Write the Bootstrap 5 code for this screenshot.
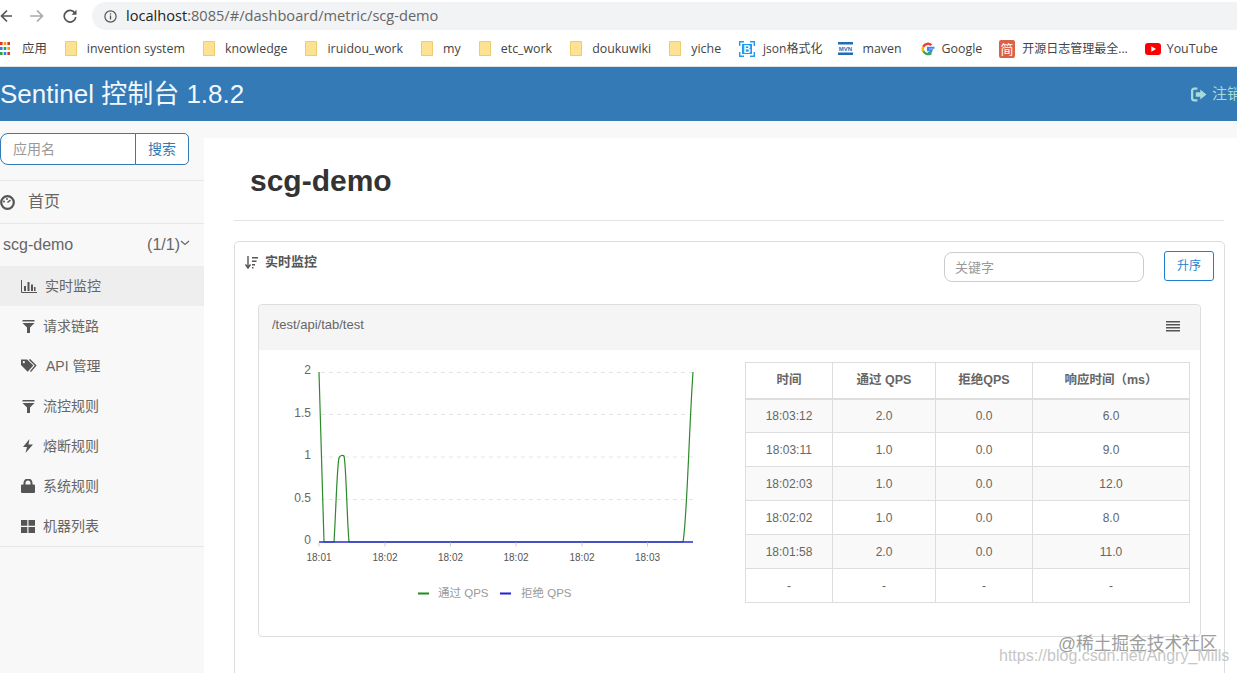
<!DOCTYPE html>
<html lang="zh">
<head>
<meta charset="utf-8">
<title>Sentinel 控制台</title>
<link href="https://cdn.jsdelivr.net/npm/bootstrap@5.3.0/dist/css/bootstrap.min.css" rel="stylesheet">
<style>
html,body{height:100%;overflow:hidden;background:#fff}
body{font-family:"Liberation Sans","Noto Sans CJK SC",sans-serif;font-size:14px;color:#333}
.shell{height:673px;overflow:hidden;position:relative}
.urlrow{height:30px;background:#fff;padding:2px 0 0 0;gap:0}
.backg{width:12px;margin-right:18px}
.fwdg{margin-right:19px}
.urlpill{flex:1;height:28px;background:#f1f3f4;border-radius:14px 0 0 14px;margin-left:15px;padding-left:12px;font-family:"Open Sans","Noto Sans CJK SC",sans-serif;font-size:14.6px;color:#666;gap:9px}
.urlpill b{font-weight:400;color:#222}
.bmrow{height:37px;background:#fff;padding-top:2px;font-family:"Open Sans","Noto Sans CJK SC",sans-serif;font-size:12.4px;color:#444;white-space:nowrap;border-bottom:1px solid #dfe3e8;overflow:hidden}
.bmitem{gap:10px;margin-right:18px;flex:none}
.bmfirst{margin-right:18px;gap:12px;flex:none}
.bmjson{gap:8px;margin-right:16px;flex:none}
.bmjson span{font-size:12px}
.bmmvn{gap:9px;margin-right:19px;flex:none}
.bmgoogle{gap:7px;margin-right:17px;flex:none}
.bmjian{gap:7px;margin-right:17px;flex:none}
.bmjian span{font-size:12px}
.bmyt{gap:6px;flex:none}
.topnav{height:54px;background:#337ab7;padding:0;overflow:hidden;flex-wrap:nowrap}
.brandtxt{font-size:26px;color:#f1f7fb;line-height:54px}
.logout{color:#a7dbd8;font-size:15px;gap:5px;margin-right:-5px;flex:none;white-space:nowrap}
.bodyrow{height:552px;background:#f8f8f8}
.sidecol{width:204px;flex:none;padding-top:12px;color:#666}
.searchgrp{width:189px;height:32px;margin-bottom:15px}
.searchgrp .form-control{font-size:14px;height:32px;border-color:#337ab7;padding:0 12px;border-radius:8px 0 0 8px;box-shadow:none}
.searchgrp .form-control::placeholder{color:#999}
.searchgrp .btn{font-size:14px;color:#337ab7;border-color:#337ab7;background:#fff;border-radius:0 5px 5px 0;padding:0 12px;height:32px}
.homeitem{height:44px;border-top:1px solid #e7e7e7;border-bottom:1px solid #e7e7e7;font-size:16px;gap:12px;padding-left:0;color:#666}
.appitem{height:42px;font-size:16px;color:#666;padding:0 14px 0 3px}
.sideitem{height:40px;font-size:14px;color:#666;padding-left:21px;gap:8px}
.sideitem.current{background:#eee}
.sideend{height:41px;border-bottom:1px solid #e7e7e7}
.iconf{margin-left:1px}
.iconb{margin:0 2px}
.maincol{flex:1;background:#fff;margin-top:17px;padding:0 13px 0 30px;min-width:0}
.headzone{height:83px;padding:24px 0 0 16px;border-bottom:1px solid #e2e2e2}
.headzone h1{font-size:30px;font-weight:700;line-height:38px;margin:0;color:#333}
.outercard{margin-top:20px;height:520px;border:1px solid #ddd;border-radius:5px;width:991px}
.outerhead{height:62px;padding:9px 10px 0 10px}
.titletxt{font-size:13px;font-weight:700;color:#555;gap:7px;padding-top:2px;height:20px}
.kw{width:200px;height:30px;font-size:13px;border:1px solid #ccc;border-radius:8px;padding:0 10px;box-shadow:none;margin-top:1px}
.kw::placeholder{color:#999}
.ascbtn{width:50px;height:30px;font-size:12px;color:#1e7fd0;border:1px solid #1e7fd0;background:#fff;border-radius:3px;padding:0;margin-left:20px}
.innercard{margin:0 23px;border:1px solid #ddd;border-radius:4px;--bs-card-border-color:#ddd}
.innerhead{height:45px;background:#f5f5f5;font-size:13px;color:#666;padding:0 20px 2px 13px;border:0}
.innerhead span{margin-bottom:3px}
.innerbody{padding:12px 10px 29px 0}
.chartsvg{width:486px;height:245px;flex:none;display:block}
.chartsvg text{font-family:"Liberation Sans","Noto Sans CJK SC",sans-serif}
.qps{width:444px;table-layout:fixed;margin:0;font-size:12px;color:#666;--bs-table-border-color:#ddd;--bs-table-striped-bg:#f9f9f9;--bs-table-striped-color:#666;--bs-table-color:#666;border-color:#ddd}
.qps td,.qps th{text-align:center;vertical-align:middle;padding:0;height:34px;color:#666}
.qps thead th{height:36px;font-weight:700;font-size:12.5px;border-bottom:2px solid #ddd}
.c1{width:87px}.c2{width:103px}.c3{width:97px}.c4{width:157px}
.markone{position:absolute;left:1058px;top:632px;font-size:17.7px;line-height:24px;color:#8d8d8d;opacity:.85;white-space:nowrap}
.marktwo{position:absolute;left:999px;top:646px;font-size:16px;line-height:20px;color:#bdbdbd;opacity:.85;white-space:nowrap}
</style>
</head>
<body>
<div class="shell d-flex flex-column">
  <div class="urlrow d-flex align-items-center">
    <svg class="backg" viewBox="0 0 12 14" height="14"><path d="M12 7H2M7 1.500 1.500 7 7 12.500" fill="none" stroke="#555" stroke-width="1.700"/></svg>
    <svg class="fwdg" width="14" height="14" viewBox="0 0 14 14"><path d="M0 7h12M7 1.500 12.500 7 7 12.500" fill="none" stroke="#aaa" stroke-width="1.700"/></svg>
    <svg width="14" height="14" viewBox="0 0 14 14"><path d="M12 4.200A5.800 5.800 0 1 0 12.800 8" fill="none" stroke="#555" stroke-width="1.700"/><path d="M13.500 .8v5h-5z" fill="#555"/></svg>
    <div class="urlpill d-flex align-items-center">
      <svg width="13" height="13" viewBox="0 0 13 13"><circle cx="6.500" cy="6.500" r="5.600" fill="none" stroke="#555" stroke-width="1.200"/><path d="M6.500 5.600v4M6.500 3.300v1.200" stroke="#555" stroke-width="1.300"/></svg>
      <span><b>localhost</b>:8085/#/dashboard/metric/scg-demo</span>
    </div>
  </div>
  <div class="bmrow d-flex align-items-center">
    <div class="bmfirst d-flex align-items-center">
      <svg width="10" height="13" viewBox="0 0 10 13"><g><rect x="0" y="0" width="2.600" height="3" fill="#d8382c"/><rect x="3.700" y="0" width="2.600" height="3" fill="#e8a21c"/><rect x="7.400" y="0" width="2.600" height="3" fill="#d8382c"/><rect x="0" y="5" width="2.600" height="3" fill="#3c7fe0"/><rect x="3.700" y="5" width="2.600" height="3" fill="#2f9e4d"/><rect x="7.400" y="5" width="2.600" height="3" fill="#e8a21c"/><rect x="0" y="10" width="2.600" height="3" fill="#2f9e4d"/><rect x="3.700" y="10" width="2.600" height="3" fill="#3c7fe0"/><rect x="7.400" y="10" width="2.600" height="3" fill="#d8382c"/></g></svg>
      <span>应用</span>
    </div>
    <div class="bmitem d-flex align-items-center"><svg width="12" height="15" viewBox="0 0 12 15"><path d="M.5.5h11v14H.5z" fill="#fde293" stroke="#eecb6c"/></svg><span>invention system</span></div>
    <div class="bmitem d-flex align-items-center"><svg width="12" height="15" viewBox="0 0 12 15"><path d="M.5.5h11v14H.5z" fill="#fde293" stroke="#eecb6c"/></svg><span>knowledge</span></div>
    <div class="bmitem d-flex align-items-center"><svg width="12" height="15" viewBox="0 0 12 15"><path d="M.5.5h11v14H.5z" fill="#fde293" stroke="#eecb6c"/></svg><span>iruidou_work</span></div>
    <div class="bmitem d-flex align-items-center"><svg width="12" height="15" viewBox="0 0 12 15"><path d="M.5.5h11v14H.5z" fill="#fde293" stroke="#eecb6c"/></svg><span>my</span></div>
    <div class="bmitem d-flex align-items-center"><svg width="12" height="15" viewBox="0 0 12 15"><path d="M.5.5h11v14H.5z" fill="#fde293" stroke="#eecb6c"/></svg><span>etc_work</span></div>
    <div class="bmitem d-flex align-items-center"><svg width="12" height="15" viewBox="0 0 12 15"><path d="M.5.5h11v14H.5z" fill="#fde293" stroke="#eecb6c"/></svg><span>doukuwiki</span></div>
    <div class="bmitem d-flex align-items-center"><svg width="12" height="15" viewBox="0 0 12 15"><path d="M.5.5h11v14H.5z" fill="#fde293" stroke="#eecb6c"/></svg><span>yiche</span></div>
    <div class="bmjson d-flex align-items-center"><svg width="16" height="16" viewBox="0 0 16 16"><path d="M.7 5V.7H5M11 .7h4.300V5M15.300 11v4.300H11M5 15.300H.7V11" fill="none" stroke="#1e9bf0" stroke-width="1.400"/><rect x="3" y="3" width="10" height="10" fill="#1e9bf0"/><text x="8" y="12" font-size="10" font-weight="700" fill="#fff" text-anchor="middle" font-family="Liberation Sans">B</text></svg><span>json格式化</span></div>
    <div class="bmmvn d-flex align-items-center"><svg width="15" height="13" viewBox="0 0 15 13"><rect width="15" height="2.500" fill="#1f6fb5"/><rect y="10.500" width="15" height="2.500" fill="#1f6fb5"/><text x="7.500" y="9" font-size="6" font-weight="700" fill="#1f6fb5" text-anchor="middle" font-family="Liberation Sans">MVN</text></svg><span>maven</span></div>
    <div class="bmgoogle d-flex align-items-center"><svg width="14" height="14" viewBox="0 0 14 14"><path d="M13.500 5.800H7v2.500h3.700A4 4 0 0 1 7 11" fill="none" stroke="#4285f4" stroke-width="2"/><path d="M10.700 8.300A4 4 0 0 1 3 7l-2 2a6.500 6.500 0 0 0 9.500 3.400z" fill="#34a853"/><path d="M3.300 5.500a4 4 0 0 0 0 3L1.200 10a6.500 6.500 0 0 1 0-6z" fill="#fbbc05"/><path d="M3.300 5.500a4 4 0 0 1 6.200-1.500l1.800-1.800A6.500 6.500 0 0 0 1.200 4z" fill="#ea4335"/></svg><span>Google</span></div>
    <div class="bmjian d-flex align-items-center"><svg width="16" height="18" viewBox="0 0 16 18"><rect width="16" height="18" rx="2" fill="#dc6148"/><text x="8" y="14" font-size="13" fill="#fff" text-anchor="middle" font-family="Noto Sans CJK SC">简</text></svg><span>开源日志管理最全...</span></div>
    <div class="bmyt d-flex align-items-center"><svg width="16" height="12" viewBox="0 0 16 12"><rect width="16" height="12" rx="3" fill="#f00"/><path d="M6.300 3.300v5.400L11 6z" fill="#fff"/></svg><span>YouTube</span></div>
  </div>
  <nav class="navbar topnav d-flex justify-content-between">
    <span class="brandtxt">Sentinel 控制台 1.8.2</span>
    <span class="logout d-flex align-items-center">
      <svg width="16" height="15" viewBox="0 0 15 14"><path d="M6 1.500H3A2 2 0 0 0 1 3.500v7a2 2 0 0 0 2 2h3" fill="none" stroke="#a7dbd8" stroke-width="2.200"/><path d="M4.500 5h4.200V2.200L14.500 7l-5.800 4.800V9H4.500z" fill="#a7dbd8"/></svg>
      <span>注销</span>
    </span>
  </nav>
  <div class="bodyrow d-flex">
    <aside class="sidecol">
      <div class="input-group searchgrp flex-nowrap">
        <input class="form-control" type="text" placeholder="应用名">
        <button class="btn" type="button">搜索</button>
      </div>
      <div class="homeitem d-flex align-items-center">
        <svg width="16" height="15" viewBox="0 0 16 15"><circle cx="7.500" cy="7.500" r="6.300" fill="none" stroke="#555" stroke-width="2.200"/><path d="M7.500 7.500 10.500 5" stroke="#555" stroke-width="1.500"/><circle cx="4" cy="6.500" r="1" fill="#555"/><circle cx="7" cy="4" r="1" fill="#555"/></svg>
        <span>首页</span>
      </div>
      <div class="appitem d-flex align-items-center justify-content-between">
        <span>scg-demo</span>
        <span class="d-flex align-items-center">(1/1)<svg width="10" height="6" viewBox="0 0 10 6" class="mb-1"><path d="M1 1l4 3.500L9 1" fill="none" stroke="#666" stroke-width="1.200"/></svg></span>
      </div>
      <div class="sideitem current d-flex align-items-center"><svg width="16" height="13" viewBox="0 0 16 13"><path d="M.5 0v12.500H16" fill="none" stroke="#555"/><path d="M3 6h2v5H3zM6.500 2h2v9h-2zM10 4.500h2V11h-2zM13 7h1.500v4H13z" fill="#555"/></svg><span>实时监控</span></div>
      <div class="sideitem d-flex align-items-center"><svg width="13" height="13" viewBox="0 0 13 13" class="iconf"><path d="M.5 0h12v1.500H.5zM.5 3h12L8 7.500V13H5V7.500z" fill="#555"/></svg><span>请求链路</span></div>
      <div class="sideitem d-flex align-items-center"><svg width="17" height="14" viewBox="0 0 18 14"><path d="M0 0h6.500L13 6.500 7 13 0 6z" fill="#555"/><path d="M9 0l6.500 6.500L10 13" fill="none" stroke="#555" stroke-width="1.500"/><circle cx="3" cy="3" r="1.200" fill="#f8f8f8"/></svg><span>API 管理</span></div>
      <div class="sideitem d-flex align-items-center"><svg width="13" height="13" viewBox="0 0 13 13" class="iconf"><path d="M.5 0h12v1.500H.5zM.5 3h12L8 7.500V13H5V7.500z" fill="#555"/></svg><span>流控规则</span></div>
      <div class="sideitem d-flex align-items-center"><svg width="10" height="14" viewBox="0 0 10 14" class="iconb"><path d="M6.500 0 0 8h4l-1.500 6L10 5.500H5.500z" fill="#555"/></svg><span>熔断规则</span></div>
      <div class="sideitem d-flex align-items-center"><svg width="14" height="14" viewBox="0 0 14 14"><path d="M3.500 6V4a3.500 3.500 0 0 1 7 0v2" fill="none" stroke="#555" stroke-width="2"/><rect y="5.500" width="14" height="8.500" rx="1" fill="#555"/></svg><span>系统规则</span></div>
      <div class="sideitem sideend d-flex align-items-center"><svg width="14" height="13" viewBox="0 0 14 13"><path d="M0 0h6.300v5.800H0zM7.500 0H14v5.800H7.500zM0 7h6.300v6H0zM7.500 7H14v6H7.500z" fill="#555"/></svg><span>机器列表</span></div>
    </aside>
    <main class="maincol">
      <div class="headzone"><h1>scg-demo</h1></div>
      <div class="outercard">
        <div class="outerhead d-flex justify-content-between">
          <div class="titletxt d-flex align-items-center">
            <svg width="13" height="13" viewBox="0 0 13 13"><path d="M3 0v11M.5 8.500 3 12l2.500-3.500" fill="none" stroke="#555" stroke-width="1.400"/><path d="M7 1h6v1.500H7zM7 4.500h4.500V6H7zM7 8h3v1.500H7zM7 11h1.500v1.500H7z" fill="#555"/></svg>
            <span>实时监控</span>
          </div>
          <div class="d-flex">
            <input class="form-control kw" type="text" placeholder="关键字">
            <button class="btn ascbtn" type="button">升序</button>
          </div>
        </div>
        <div class="card innercard">
          <div class="card-header innerhead d-flex align-items-center justify-content-between">
            <span>/test/api/tab/test</span>
            <svg width="14" height="11" viewBox="0 0 14 11"><path d="M0 0h14v1.500H0zM0 3h14v1.500H0zM0 6h14v1.500H0zM0 9h14v1.500H0z" fill="#555"/></svg>
          </div>
          <div class="innerbody d-flex align-items-start">
            <svg class="chartsvg" viewBox="259 362 486 245">
              <g stroke="#e6e6e6" stroke-dasharray="4 4"><path d="M321 372.500H693M321 414.500H693M321 457H693M321 499.500H693"/></g>
              <path d="M319 372 324 542H334C336 510 337 466 339 458 340 455 343 455 344 456 346 462 347 520 349 542H683C687 520 689 430 693 372" fill="none" stroke="#2b8a2b" stroke-width="1.200"/>
              <path d="M319 542H693" stroke="#2a2ad0" stroke-width="1.500"/>
              <path d="M319 542.500v4M385 542.500v4M450.500 542.500v4M516 542.500v4M582 542.500v4M647.500 542.500v4" stroke="#ccc"/>
              <g font-size="12" fill="#666" text-anchor="end"><text x="311" y="374">2</text><text x="311" y="417">1.5</text><text x="311" y="459">1</text><text x="311" y="502">0.5</text><text x="311" y="544">0</text></g>
              <g font-size="10" fill="#555" text-anchor="middle"><text x="319" y="561">18:01</text><text x="385" y="561">18:02</text><text x="450.500" y="561">18:02</text><text x="516" y="561">18:02</text><text x="582" y="561">18:02</text><text x="647.500" y="561">18:03</text></g>
              <path d="M418 593.500h11" stroke="#1f8a1f" stroke-width="2"/><path d="M500 593.500h11" stroke="#2020d8" stroke-width="2"/>
              <g font-size="11.500" fill="#999"><text x="438" y="597">通过 QPS</text><text x="521" y="597">拒绝 QPS</text></g>
            </svg>
            <table class="table table-bordered table-striped qps">
              <colgroup><col class="c1"><col class="c2"><col class="c3"><col class="c4"></colgroup>
              <thead><tr><th>时间</th><th>通过 QPS</th><th>拒绝QPS</th><th>响应时间（ms）</th></tr></thead>
              <tbody>
                <tr><td>18:03:12</td><td>2.0</td><td>0.0</td><td>6.0</td></tr>
                <tr><td>18:03:11</td><td>1.0</td><td>0.0</td><td>9.0</td></tr>
                <tr><td>18:02:03</td><td>1.0</td><td>0.0</td><td>12.0</td></tr>
                <tr><td>18:02:02</td><td>1.0</td><td>0.0</td><td>8.0</td></tr>
                <tr><td>18:01:58</td><td>2.0</td><td>0.0</td><td>11.0</td></tr>
                <tr><td>-</td><td>-</td><td>-</td><td>-</td></tr>
              </tbody>
            </table>
          </div>
        </div>
      </div>
    </main>
  </div>
  <div class="markone">@稀土掘金技术社区</div>
  <div class="marktwo">https://blog.csdn.net/Angry_Mills</div>
</div>
<script src="https://cdn.jsdelivr.net/npm/bootstrap@5.3.0/dist/js/bootstrap.bundle.min.js"></script>
</body>
</html>
